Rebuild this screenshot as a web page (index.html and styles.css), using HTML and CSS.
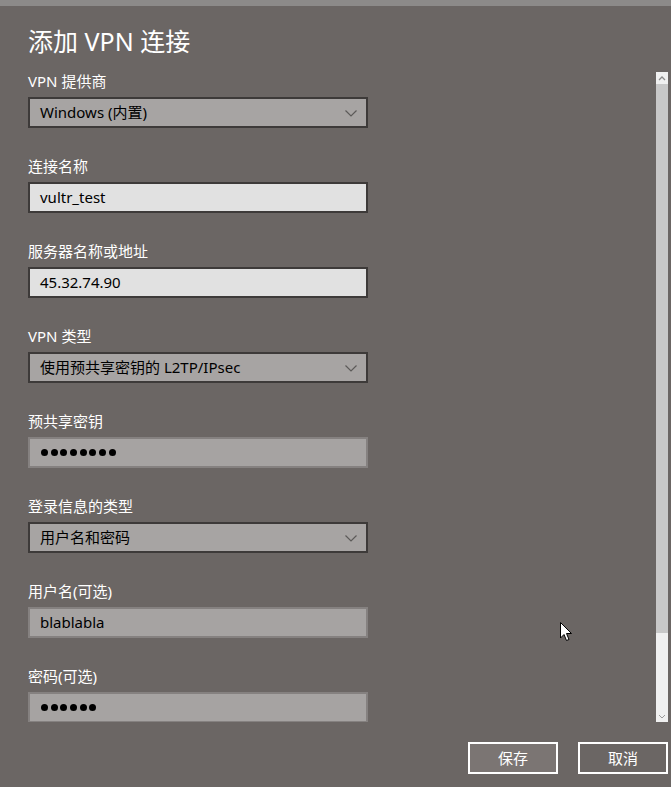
FILE: index.html
```html
<!DOCTYPE html>
<html lang="zh-CN">
<head>
<meta charset="utf-8">
<title>添加 VPN 连接</title>
<link rel="stylesheet" href="styles.css">
</head>
<body>
<div class="window">
  <div class="topstrip"></div>
  <h1 class="title">添加 VPN 连接</h1>
  <div class="main">
    <div class="form">
      <div class="group">
        <div class="label">VPN 提供商</div>
        <div class="field select"><span>Windows (内置)</span><svg class="chev" width="12" height="7" viewBox="0 0 12 7"><path d="M0.5 0.5 L6 6 L11.5 0.5" fill="none" stroke="#5c5a59" stroke-width="1.2"/></svg></div>
      </div>
      <div class="group">
        <div class="label">连接名称</div>
        <div class="field input"><span>vultr_test</span></div>
      </div>
      <div class="group">
        <div class="label">服务器名称或地址</div>
        <div class="field input"><span>45.32.74.90</span></div>
      </div>
      <div class="group">
        <div class="label">VPN 类型</div>
        <div class="field select"><span>使用预共享密钥的 L2TP/IPsec</span><svg class="chev" width="12" height="7" viewBox="0 0 12 7"><path d="M0.5 0.5 L6 6 L11.5 0.5" fill="none" stroke="#5c5a59" stroke-width="1.2"/></svg></div>
      </div>
      <div class="group">
        <div class="label">预共享密钥</div>
        <div class="field soft"><span class="dots"><i></i><i></i><i></i><i></i><i></i><i></i><i></i><i></i></span></div>
      </div>
      <div class="group">
        <div class="label">登录信息的类型</div>
        <div class="field select"><span>用户名和密码</span><svg class="chev" width="12" height="7" viewBox="0 0 12 7"><path d="M0.5 0.5 L6 6 L11.5 0.5" fill="none" stroke="#5c5a59" stroke-width="1.2"/></svg></div>
      </div>
      <div class="group">
        <div class="label">用户名(可选)</div>
        <div class="field soft"><span>blablabla</span></div>
      </div>
      <div class="group">
        <div class="label">密码(可选)</div>
        <div class="field soft"><span class="dots"><i></i><i></i><i></i><i></i><i></i><i></i></span></div>
      </div>
    </div>
    <div class="scrollbar">
      <div class="sb-btn"><svg width="8" height="5" viewBox="0 0 8 5"><path d="M1 4 L4 1 L7 4" fill="none" stroke="#8a8a8a" stroke-width="1.3"/></svg></div>
      <div class="sb-thumb"></div>
      <div class="sb-track"></div>
      <div class="sb-btn down"><svg width="8" height="5" viewBox="0 0 8 5"><path d="M1 1 L4 4 L7 1" fill="none" stroke="#9a9a9a" stroke-width="1"/></svg></div>
    </div>
  </div>
  <div class="footer">
    <button class="btn primary">保存</button>
    <button class="btn">取消</button>
  </div>
  <svg class="cursor" width="13" height="20" viewBox="0 0 13 20"><path d="M0.5 0.5 L0.5 16 L4 12.5 L6.5 18.5 L9 17.5 L6.5 11.5 L11.5 11.5 Z" fill="#fff" stroke="#000" stroke-width="1"/></svg>
</div>
</body>
</html>
```
FILE: styles.css
```css
html, body {
  margin: 0;
  padding: 0;
  background: #6b6664;
}
body {
  font-family: "Noto Sans", "Noto Sans CJK SC", sans-serif;
  color: #fff;
}
.window {
  position: relative;
  width: 671px;
  height: 787px;
  overflow: hidden;
  background: #6b6664;
}
.topstrip {
  height: 6px;
  background: #8c8a89;
}
.title {
  margin: 0;
  padding: 19px 0 15px 28px;
  height: 32px;
  line-height: 32px;
  font-size: 25px;
  font-weight: normal;
  color: #fff;
}
.main {
  display: flex;
  height: 650px;
}
.form {
  flex: 1;
  padding-left: 28px;
  overflow: hidden;
}
.group {
  width: 340px;
  margin-bottom: 29px;
}
.label {
  height: 22px;
  line-height: 18px;
  font-size: 15px;
  margin-bottom: 3px;
  color: #fff;
}
.field {
  box-sizing: border-box;
  height: 31px;
  border: 2px solid #3d3a39;
  display: flex;
  align-items: center;
  padding: 0 9px 1px 10px;
  font-size: 15px;
  color: #000;
}
.field span {
  flex: 1;
  line-height: 20px;
  white-space: nowrap;
}
.select {
  background: #a7a4a3;
}
.input {
  background: #e1e1e1;
}
.soft {
  background: #a6a3a2;
  border-color: #858180;
}
.chev {
  display: block;
  margin-top: 2px;
}
.dots {
  display: flex;
  align-items: center;
  gap: 2.7px;
  padding-left: 1px;
  padding-top: 1px;
}
.dots i {
  display: block;
  width: 7px;
  height: 7px;
  border-radius: 50%;
  background: #000;
}
.scrollbar {
  width: 12px;
  margin-right: 3px;
  display: flex;
  flex-direction: column;
  background: #f0f0f0;
}
.sb-btn {
  height: 12px;
  display: flex;
  align-items: center;
  justify-content: center;
  background: #f0f0f0;
}
.sb-thumb {
  height: 549px;
  background: #c8c8c8;
}
.sb-track {
  flex: 1;
  background: #f0f0f0;
}
.footer {
  display: flex;
  justify-content: flex-end;
  gap: 20px;
  padding: 20px 3px 0 0;
}
.btn {
  box-sizing: border-box;
  width: 90px;
  height: 32px;
  border: 2px solid #fff;
  background: #6b6664;
  color: #fff;
  font-family: "Noto Sans CJK SC", sans-serif;
  font-size: 15px;
  padding: 0;
  line-height: 26px;
}
.btn.primary {
  background: #7b7573;
}
.cursor {
  position: absolute;
  left: 560px;
  top: 622px;
}
```
